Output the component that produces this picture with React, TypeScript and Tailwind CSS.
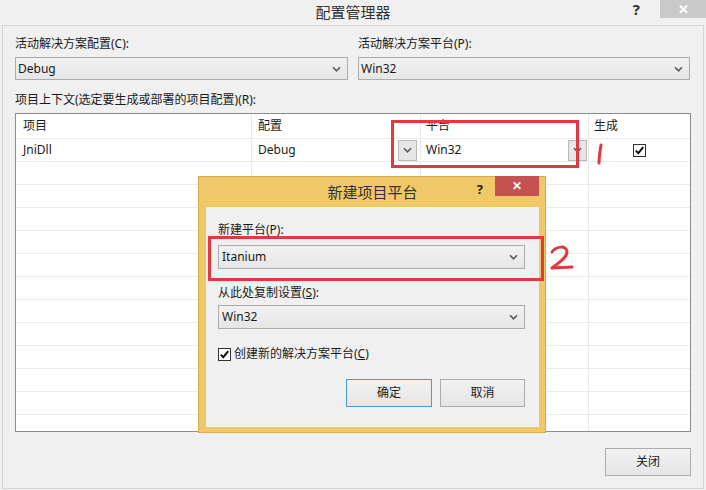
import React from 'react';

const Chevron = () => (
  <svg width="9" height="6" viewBox="0 0 9 6" className="shrink-0">
    <path d="M1 1.2 L4.5 4.8 L8 1.2" fill="none" stroke="#5a5a5a" strokeWidth="1.6" />
  </svg>
);

const Check = ({ className }: { className?: string }) => (
  <div className={`flex h-[13px] w-[13px] items-center justify-center border border-[#333] bg-white ${className ?? ''}`}>
    <svg width="11" height="11" viewBox="0 0 11 11">
      <path d="M1.8 5.6 L4.3 8.2 L9.2 2.2" fill="none" stroke="#111" strokeWidth="2" />
    </svg>
  </div>
);

function Combo({ value, className }: { value: string; className: string }) {
  return (
    <div className={`flex items-center justify-between border border-[#acacac] bg-linear-to-b from-[#f2f2f2] to-[#e6e6e6] ${className}`}>
      <span>{value}</span>
      <Chevron />
    </div>
  );
}

function Button({ label, primary }: { label: string; primary?: boolean }) {
  return (
    <div
      className={`flex items-center justify-center border bg-linear-to-b from-[#f2f2f2] to-[#e5e5e5] ${
        primary ? 'border-[#4a9ad8]' : 'border-[#acacac]'
      } h-[28px]`}
    >
      {label}
    </div>
  );
}

const CellDrop = ({ className }: { className: string }) => (
  <div className={`flex h-[21px] w-[19px] items-center justify-center border border-[#b9b9b9] bg-[#e6e6e6] ${className}`}>
    <Chevron />
  </div>
);

export default function App() {
  const emptyRows = Array.from({ length: 12 });

  return (
    <div className="relative h-[490px] w-[706px] overflow-hidden bg-[#f0f0f0] font-['Noto_Sans','Noto_Sans_CJK_SC',sans-serif] text-[12px] leading-[16px] text-[#1a1a1a]">
      {/* title bar */}
      <div className="grid h-[25px] grid-cols-[1fr_auto_1fr]">
        <div />
        <div className="pt-[2px] text-[15px] leading-[20px] text-[#333]">配置管理器</div>
        <div className="flex items-start justify-end">
          <span className="mr-[20px] mt-[1px] text-[15px] font-bold leading-[16px] text-[#333]">?</span>
          <div className="flex h-[18px] w-[46px] items-center justify-center bg-[#c9c9c9] text-[13px] font-bold text-white">✕</div>
        </div>
      </div>

      {/* body */}
      <div className="mx-[2px] flex h-[464px] flex-col border border-[#d4d4d4] px-[12px] pt-[10px]">
        <div className="grid grid-cols-[333px_332px] gap-x-[10px]">
          <div>
            <div>活动解决方案配置(C):</div>
            <Combo value="Debug" className="mt-[5px] h-[23px] pl-[2px] pr-[6px]" />
          </div>
          <div>
            <div>活动解决方案平台(P):</div>
            <Combo value="Win32" className="mt-[5px] h-[23px] pl-[2px] pr-[6px]" />
          </div>
        </div>

        <div className="mt-[12px]">项目上下文(选定要生成或部署的项目配置)(R):</div>

        <div className="mt-[5px] h-[319px] overflow-hidden border border-[#8c8c8c] bg-white">
          <div className="grid grid-cols-[236px_169px_168px_1fr]">
            <div className="flex h-[25px] items-center border-b border-r border-[#ebebeb] pl-[7px]">项目</div>
            <div className="flex h-[25px] items-center border-b border-r border-[#ebebeb] pl-[6px]">配置</div>
            <div className="flex h-[25px] items-center border-b border-r border-[#ebebeb] pl-[5px]">平台</div>
            <div className="flex h-[25px] items-center border-b border-[#ebebeb] pl-[5px]">生成</div>

            <div className="flex h-[23px] items-center border-b border-r border-[#ebebeb] pl-[7px]">JniDll</div>
            <div className="flex h-[23px] items-center justify-between border-b border-r border-[#ebebeb] pl-[6px]">
              <span>Debug</span>
              <CellDrop className="mr-[3px]" />
            </div>
            <div className="flex h-[23px] items-center justify-between border-b border-r border-[#ebebeb] pl-[5px]">
              <span>Win32</span>
              <CellDrop className="mr-[1px]" />
            </div>
            <div className="flex h-[23px] items-center justify-center border-b border-[#ebebeb]">
              <Check />
            </div>

            {emptyRows.map((_, i) => (
              <React.Fragment key={i}>
                <div className="h-[23px] border-b border-r border-[#ebebeb]" />
                <div className="h-[23px] border-b border-r border-[#ebebeb]" />
                <div className="h-[23px] border-b border-r border-[#ebebeb]" />
                <div className="h-[23px] border-b border-[#ebebeb]" />
              </React.Fragment>
            ))}
          </div>
        </div>

        <div className="mt-[16px] flex justify-end">
          <div className="w-[86px]">
            <Button label="关闭" />
          </div>
        </div>
      </div>

      {/* new platform dialog */}
      <div className="absolute left-[198px] top-[176px] flex h-[257px] w-[348px] flex-col border border-[#d6ac52] bg-[#f0c868] pb-[5px] pl-[7px] pr-[6px]">
        <div className="relative flex h-[30px] shrink-0 items-start justify-center">
          <span className="pt-[5px] text-[15px] leading-[20px] text-[#333]">新建项目平台</span>
          <div className="absolute right-0 top-[-1px] flex items-start">
            <span className="mr-[12px] mt-[6px] text-[13px] font-bold leading-[14px] text-[#222]">?</span>
            <div className="flex h-[20px] w-[44px] items-center justify-center bg-[#c75050] text-[12px] font-bold text-white">✕</div>
          </div>
        </div>
        <div className="flex flex-1 flex-col bg-[#f0f0f0] pl-[12px] pr-[14px] pt-[15px]">
          <div>新建平台(P):</div>
          <Combo value="Itanium" className="mt-[7px] h-[24px] pl-[3px] pr-[6px]" />
          <div className="mt-[16px]">
            从此处复制设置(<span className="underline">S</span>):
          </div>
          <Combo value="Win32" className="mt-[4px] h-[24px] pl-[3px] pr-[6px]" />
          <div className="mt-[17px] flex items-center gap-[3px]">
            <Check />
            <span>
              创建新的解决方案平台(<span className="underline">C</span>)
            </span>
          </div>
          <div className="mt-[17px] flex justify-end gap-[8px]">
            <div className="w-[86px]">
              <Button label="确定" primary />
            </div>
            <div className="w-[85px]">
              <Button label="取消" />
            </div>
          </div>
        </div>
      </div>

      {/* red annotations */}
      <svg className="pointer-events-none absolute inset-0" width="706" height="490">
        <rect x="392.5" y="121.5" width="185" height="45" fill="none" stroke="#e0393e" strokeWidth="3" />
        <rect x="209.5" y="237.5" width="333" height="42" fill="none" stroke="#e0393e" strokeWidth="3" />
        <path d="M601 145 C600 151 599 157 599 163" fill="none" stroke="#e0393e" strokeWidth="3" strokeLinecap="round" />
        <path
          d="M552 252 C556 246 567 245 567 252 C567 258 558 263 552 268 C558 268 565 267 572 267"
          fill="none"
          stroke="#e0393e"
          strokeWidth="3"
          strokeLinecap="round"
          strokeLinejoin="round"
        />
      </svg>
    </div>
  );
}
